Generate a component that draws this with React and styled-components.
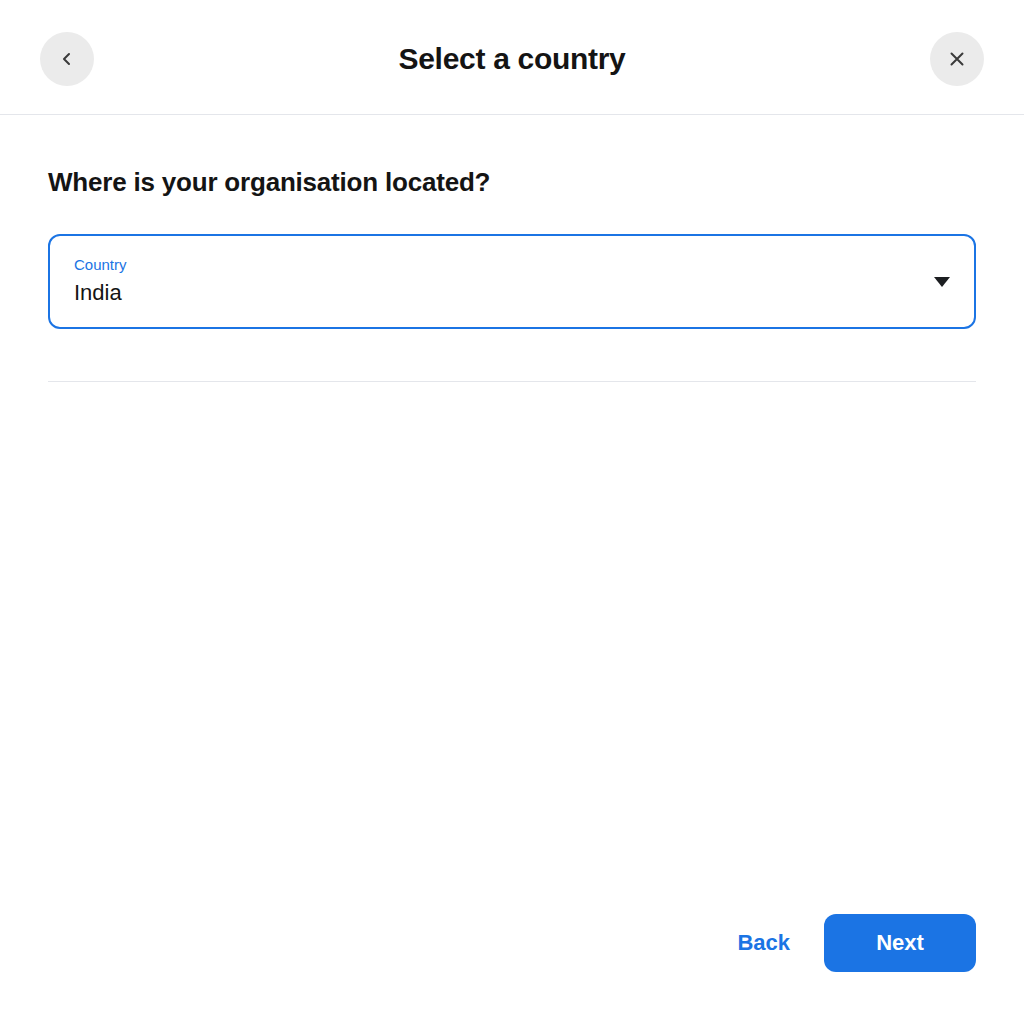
import React from "react";
import styled, { createGlobalStyle } from "styled-components";

const Global = createGlobalStyle`
  html, body {
    margin: 0;
    padding: 0;
    background: #fff;
    font-family: "Liberation Sans", Arial, sans-serif;
    color: #1c1e21;
  }
`;

const Page = styled.div`
  height: 1024px;
  display: flex;
  flex-direction: column;
`;

const Header = styled.header`
  height: 115px;
  box-sizing: border-box;
  border-bottom: 1px solid #e4e6eb;
  display: flex;
  align-items: flex-start;
  justify-content: space-between;
  padding: 32px 40px 0;
`;

const Title = styled.h1`
  margin: 0;
  line-height: 54px;
  font-size: 30px;
  font-weight: 700;
  letter-spacing: -0.3px;
  color: #141414;
`;

const RoundButton = styled.button`
  width: 54px;
  height: 54px;
  border-radius: 50%;
  border: none;
  background: #ebebeb;
  display: flex;
  align-items: center;
  justify-content: center;
  padding: 0;
  color: #3a3a3a;
  cursor: pointer;
`;

const Body = styled.main`
  flex: 1;
  padding: 52px 48px 0;
  display: flex;
  flex-direction: column;
`;

const Question = styled.h2`
  margin: 0 0 36px;
  font-size: 26px;
  font-weight: 700;
  letter-spacing: -0.2px;
  color: #141414;
`;

const Select = styled.div`
  height: 95px;
  box-sizing: border-box;
  border: 2px solid #1b74e4;
  border-radius: 12px;
  display: flex;
  align-items: center;
  justify-content: space-between;
  padding: 0 24px;
`;

const Field = styled.div`
  align-self: flex-start;
  padding-top: 20px;
  display: flex;
  flex-direction: column;
  gap: 7px;
`;

const Label = styled.span`
  font-size: 15px;
  color: #1b74e4;
`;

const Value = styled.span`
  font-size: 22px;
  color: #141414;
`;

const Caret = styled.span`
  width: 0;
  height: 0;
  border-left: 8px solid transparent;
  border-right: 8px solid transparent;
  border-top: 10px solid #1c1e21;
`;

const Divider = styled.hr`
  margin: 52px 0 0;
  border: none;
  border-top: 1px solid #e4e6eb;
`;

const Footer = styled.footer`
  display: flex;
  justify-content: flex-end;
  align-items: center;
  gap: 34px;
  padding: 0 48px 52px;
`;

const TextButton = styled.button`
  background: none;
  border: none;
  padding: 0;
  font-family: inherit;
  font-size: 22px;
  font-weight: 700;
  color: #1b74e4;
  cursor: pointer;
`;

const PrimaryButton = styled.button`
  width: 152px;
  height: 58px;
  border: none;
  border-radius: 12px;
  background: #1b74e4;
  color: #fff;
  font-family: inherit;
  font-size: 22px;
  font-weight: 700;
  cursor: pointer;
`;

export default function App() {
  return (
    <Page>
      <Global />
      <Header>
        <RoundButton aria-label="Back">
          <svg width="20" height="20" viewBox="0 0 20 20" fill="none">
            <path d="M12 5l-5 5 5 5" stroke="currentColor" strokeWidth="2" strokeLinecap="round" strokeLinejoin="round" />
          </svg>
        </RoundButton>
        <Title>Select a country</Title>
        <RoundButton aria-label="Close">
          <svg width="20" height="20" viewBox="0 0 20 20" fill="none">
            <path d="M4.5 4.5l11 11M15.5 4.5l-11 11" stroke="currentColor" strokeWidth="2" strokeLinecap="round" />
          </svg>
        </RoundButton>
      </Header>
      <Body>
        <Question>Where is your organisation located?</Question>
        <Select>
          <Field>
            <Label>Country</Label>
            <Value>India</Value>
          </Field>
          <Caret />
        </Select>
        <Divider />
      </Body>
      <Footer>
        <TextButton>Back</TextButton>
        <PrimaryButton>Next</PrimaryButton>
      </Footer>
    </Page>
  );
}
